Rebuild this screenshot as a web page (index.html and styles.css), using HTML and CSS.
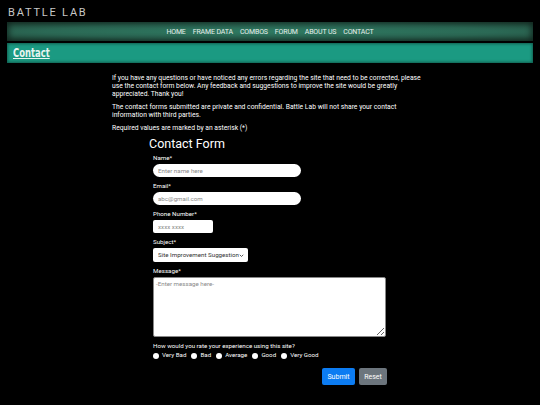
FILE: index.html
```html
<!DOCTYPE html>
<html lang="en">
<head>
<meta charset="utf-8">
<title>Battle Lab - Contact</title>
<link rel="stylesheet" href="styles.css">
</head>
<body>
<header class="site-header">
  <div class="logo">BATTLE LAB</div>
</header>
<nav class="main-nav">
  <a href="#">HOME</a>
  <a href="#">FRAME DATA</a>
  <a href="#">COMBOS</a>
  <a href="#">FORUM</a>
  <a href="#">ABOUT US</a>
  <a href="#">CONTACT</a>
</nav>
<div class="title-bar"><h1>Contact</h1></div>
<main class="content">
  <p>If you have any questions or have noticed any errors regarding the site that need to be corrected, please use the contact form below. Any feedback and suggestions to improve the site would be greatly appreciated. Thank you!</p>
  <p>The contact forms submitted are private and confidential. Battle Lab will not share your contact information with third parties.</p>
  <p>Required values are marked by an asterisk (*)</p>
  <form class="contact-form">
    <h2>Contact Form</h2>
    <div class="field">
      <label>Name*</label>
      <input class="pill wide" type="text" placeholder="Enter name here">
    </div>
    <div class="field">
      <label>Email*</label>
      <input class="pill wide" type="text" placeholder="abc@gmail.com">
    </div>
    <div class="field">
      <label>Phone Number*</label>
      <input class="box phone" type="text" placeholder="xxxx xxxx">
    </div>
    <div class="field">
      <label>Subject*</label>
      <div class="select-wrap">
        <select class="subject"><option>Site Improvement Suggestion</option></select>
        <svg class="chev" viewBox="0 0 10 10" width="5" height="5"><path d="M1.5 3.5 L5 7 L8.5 3.5" fill="none" stroke="#333" stroke-width="1.6"/></svg>
      </div>
    </div>
    <div class="field">
      <label>Message*</label>
      <textarea class="message" placeholder="-Enter message here-"></textarea>
    </div>
    <div class="rating">
      <div class="rating-q">How would you rate your experience using this site?</div>
      <div class="rating-opts">
        <label><input type="radio" name="r">Very Bad</label>
        <label><input type="radio" name="r">Bad</label>
        <label><input type="radio" name="r">Average</label>
        <label><input type="radio" name="r">Good</label>
        <label><input type="radio" name="r">Very Good</label>
      </div>
    </div>
    <div class="actions">
      <button type="button" class="btn submit">Submit</button>
      <button type="button" class="btn reset">Reset</button>
    </div>
  </form>
</main>
</body>
</html>
```
FILE: styles.css
```css
html, body {
  margin: 0;
  padding: 0;
  background: #000;
  color: #fff;
  font-family: Roboto, "Liberation Sans", Arial, sans-serif;
}
.site-header {
  height: 22px;
  padding: 0 8px;
  display: flex;
  align-items: center;
}
.logo {
  font-size: 11px;
  letter-spacing: 1.8px;
  color: #c8c8c8;
  padding-top: 3px;
}
.main-nav {
  margin: 0 7px;
  height: 19px;
  display: flex;
  justify-content: center;
  align-items: center;
  gap: 7px;
  background: radial-gradient(ellipse at center, #2f7a62 0%, #2c6a56 60%, #24503f 100%);
  box-shadow: inset 0 0 6px 2px rgba(0,0,0,0.55);
}
.main-nav a {
  color: #e8f0ec;
  text-decoration: none;
  font-size: 7px;
  letter-spacing: -0.15px;
}
.title-bar {
  margin: 2px 7px 0;
  height: 20px;
  background: #1b9a82;
  box-shadow: inset 0 0 3px 1px rgba(0,0,0,0.4);
  display: flex;
  align-items: center;
  padding-left: 6px;
}
.title-bar h1 {
  margin: 0;
  display: inline-block;
  font-family: "DejaVu Sans Condensed", "DejaVu Sans", sans-serif;
  font-weight: bold;
  font-size: 12px;
  color: #e8f4f0;
  text-decoration: underline;
  text-underline-offset: 1px;
  transform: scaleX(0.78);
  transform-origin: left center;
}
.content {
  width: 310px;
  padding-right: 6px;
  margin: 11px auto 0;
  font-size: 6.75px;
  line-height: 8px;
}
.content p {
  margin: 0 0 5px;
}
.contact-form {
  margin: 3px 0 0 37px;
  width: 240px;
}
.contact-form h2 {
  margin: 0 0 3px;
  font-size: 12.5px;
  font-weight: normal;
  line-height: 14px;
}
.field {
  padding-left: 4px;
  margin-bottom: 5px;
}
.field label {
  display: block;
  font-size: 6.2px;
  line-height: 8px;
  margin-bottom: 2px;
}
input, select, textarea, button {
  font-family: Roboto, "Liberation Sans", Arial, sans-serif;
}
.pill, .box {
  display: block;
  box-sizing: border-box;
  height: 13px;
  border: 0;
  background: #fff;
  font-size: 6.2px;
  padding: 0 5px;
  outline: none;
}
.pill { border-radius: 7px; }
.wide { width: 148px; }
.box { border-radius: 2px; }
.phone { width: 60px; }
::placeholder { color: #8a8a8a; }
.select-wrap {
  position: relative;
  width: 95px;
  height: 14px;
  margin-top: 1px;
}
.subject {
  appearance: none;
  -webkit-appearance: none;
  display: block;
  box-sizing: border-box;
  width: 95px;
  height: 14px;
  font-size: 6.2px;
  border: 0;
  border-radius: 2px;
  background: #fff;
  color: #333;
  padding: 0 0 0 5px;
}
.chev {
  position: absolute;
  right: 4px;
  top: 4.5px;
}
.message {
  display: block;
  box-sizing: border-box;
  width: 233px;
  height: 60px;
  border: 1px solid #888;
  border-radius: 2px;
  font-size: 6.2px;
  padding: 2px 2px;
  resize: vertical;
}
.rating {
  padding-left: 4px;
  margin-top: 3px;
  font-size: 6.2px;
}
.rating-q { line-height: 9px; }
.rating-opts {
  display: flex;
  gap: 5px;
  line-height: 9px;
}
.rating-opts label {
  display: flex;
  align-items: center;
  gap: 3px;
}
.rating-opts input {
  appearance: none;
  -webkit-appearance: none;
  margin: 0;
  width: 6px;
  height: 6px;
  border-radius: 50%;
  background: #fff;
}
.actions {
  display: flex;
  justify-content: flex-end;
  gap: 4px;
  margin-top: 8px;
  width: 238px;
}
.btn {
  height: 17px;
  border: 0;
  border-radius: 2px;
  color: #fff;
  font-size: 7px;
  padding: 0 4px;
}
.submit { background: #0c7cf2; width: 33px; }
.reset { background: #6c757d; width: 28px; }
```
